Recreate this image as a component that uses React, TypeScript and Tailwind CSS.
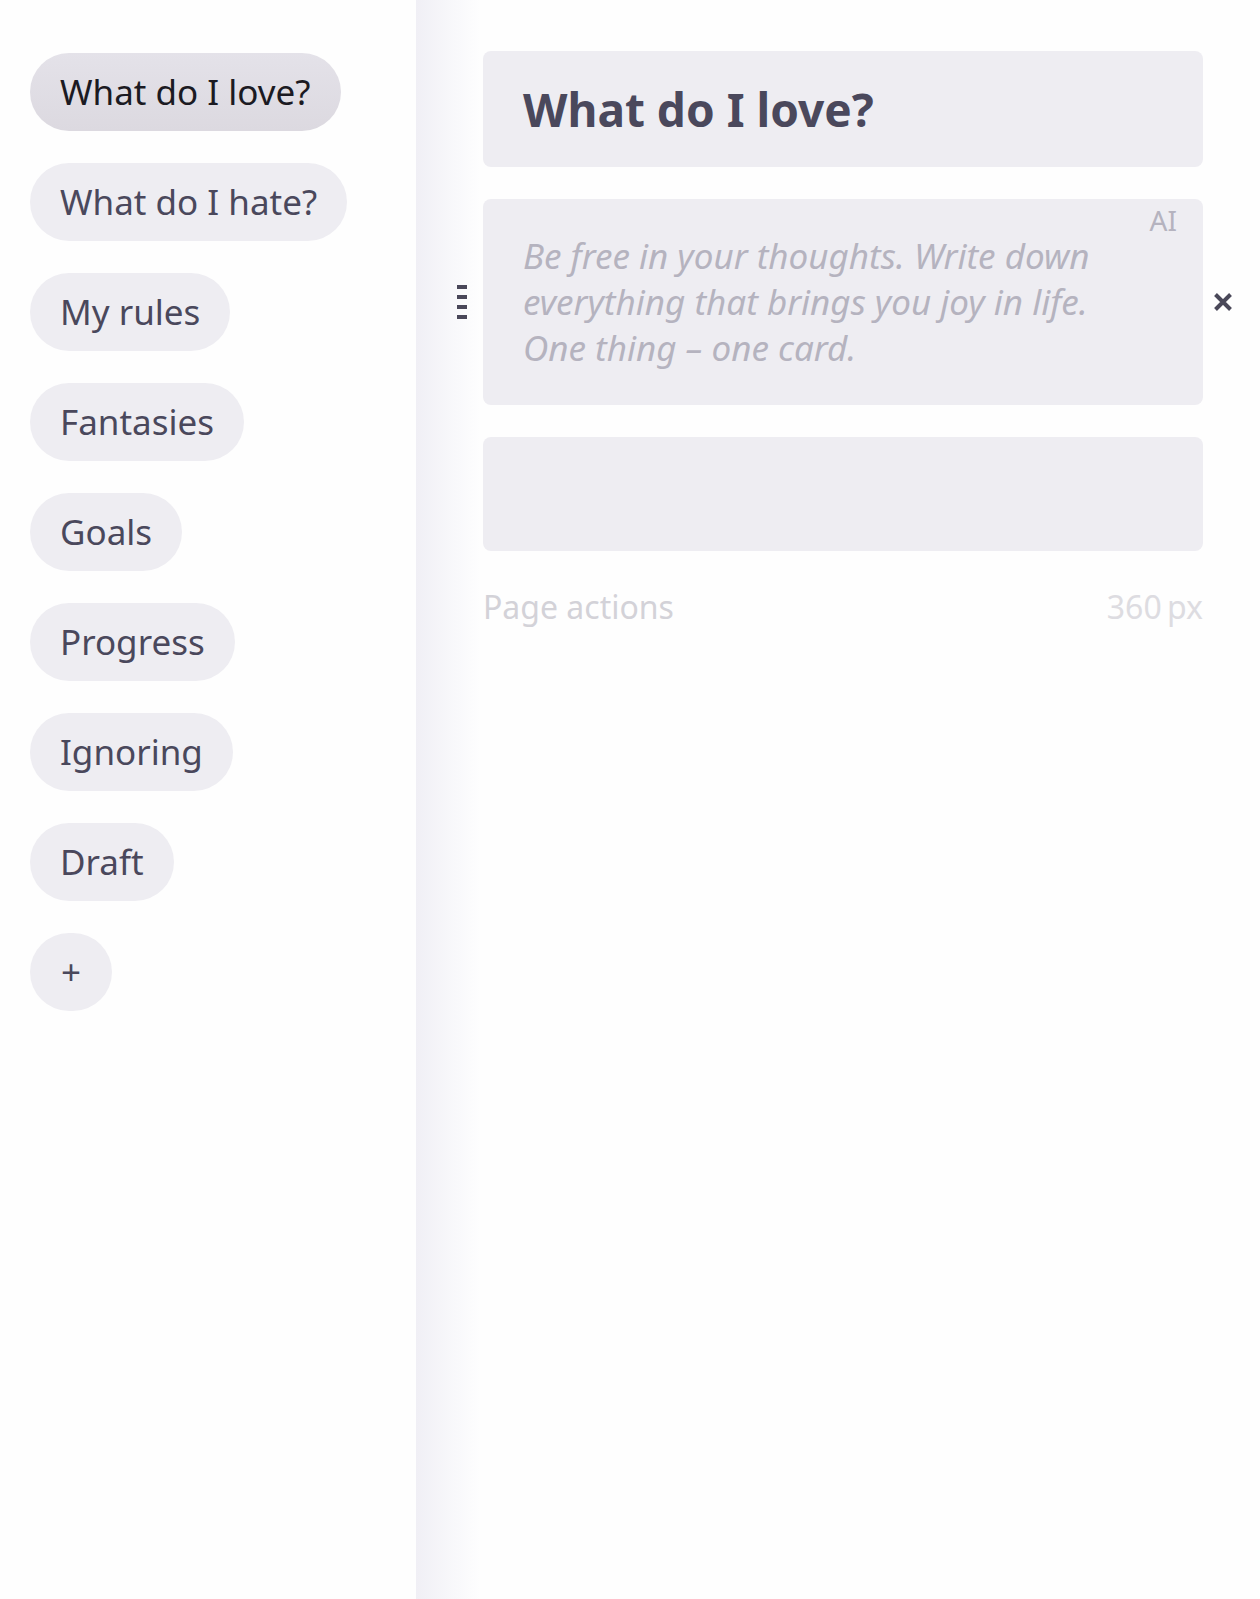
import React, { useState } from "react";

const pages = [
  "What do I love?",
  "What do I hate?",
  "My rules",
  "Fantasies",
  "Goals",
  "Progress",
  "Ignoring",
  "Draft",
];

const pill = "h-[78px] min-w-[82px] rounded-full px-[30px] text-[35px] leading-[46px] whitespace-nowrap";

function Sidebar({ active, onSelect }: { active: string; onSelect: (page: string) => void }) {
  return (
    <aside className="w-[416px] shrink-0 px-[30px] pt-[53px]">
      <nav aria-label="Pages" className="flex flex-col items-start gap-8">
        {pages.map((page) => (
          <button
            key={page}
            type="button"
            aria-current={page === active ? "page" : undefined}
            onClick={() => onSelect(page)}
            className={
              page === active
                ? `${pill} bg-linear-to-b from-[#e4e2e9] to-[#dcd9e0] text-[#1b1a22]`
                : `${pill} bg-[#eeedf2] text-[#4a485c]`
            }
          >
            {page}
          </button>
        ))}
        <button type="button" aria-label="Add page" className={`${pill} bg-[#eeedf2] text-[#4a485c]`}>
          +
        </button>
      </nav>
    </aside>
  );
}

function DragHandle() {
  return (
    <button
      type="button"
      aria-label="Move card"
      className="absolute top-1/2 right-full mr-4 flex -translate-y-1/2 cursor-grab flex-col gap-1.5"
    >
      <span className="h-1 w-2.5 bg-[#4a4859]" />
      <span className="h-1 w-2.5 bg-[#4a4859]" />
      <span className="h-1 w-2.5 bg-[#4a4859]" />
      <span className="h-1 w-2.5 bg-[#4a4859]" />
    </button>
  );
}

function RemoveButton() {
  return (
    <button type="button" aria-label="Remove card" className="absolute top-1/2 left-full ml-2.5 -translate-y-1/2">
      <svg width="20" height="20" viewBox="0 0 20 20" fill="none" stroke="#4a4859" strokeWidth="4">
        <path d="M2.5 2.5 17.5 17.5M17.5 2.5 2.5 17.5" />
      </svg>
    </button>
  );
}

export default function App() {
  const [active, setActive] = useState(pages[0]);

  return (
    <div className="flex min-h-screen bg-[#fefefe] font-['Noto_Sans',sans-serif]">
      <Sidebar active={active} onSelect={setActive} />
      <main className="min-w-0 flex-1 bg-[linear-gradient(to_right,#f0eff5,#f7f7fa_32px,#fefefe_64px)] pt-[51px] pr-[57px] pl-[67px]">
        <div className="flex flex-col gap-8">
          <h1 className="rounded-lg bg-[#eeedf2] px-10 py-7 text-[46px] leading-[60px] font-bold text-[#4a485c]">
            {active}
          </h1>
          <section aria-label="Card" className="relative rounded-lg bg-[#eeedf2] py-[34px] pr-[80px] pl-10">
            <p className="text-[35px] leading-[46px] text-[#b5b3bf] italic">
              Be free in your thoughts. Write down everything that brings you joy in life. One thing – one card.
            </p>
            <span className="absolute top-1.5 right-[26px] text-[28px] leading-[30px] text-[#b5b3bf]">AI</span>
            <DragHandle />
            <RemoveButton />
          </section>
          <textarea
            aria-label="New card"
            rows={1}
            className="block w-full resize-none rounded-lg bg-[#eeedf2] px-10 py-[34px] text-[35px] leading-[46px] text-[#4a485c] outline-none"
          />
        </div>
        <div className="mt-8 flex items-center justify-between text-[32px] leading-[48px]">
          <button type="button" className="text-[#d3d2d8]">
            Page actions
          </button>
          <span className="text-[#dddce1]">360&thinsp;px</span>
        </div>
      </main>
    </div>
  );
}
